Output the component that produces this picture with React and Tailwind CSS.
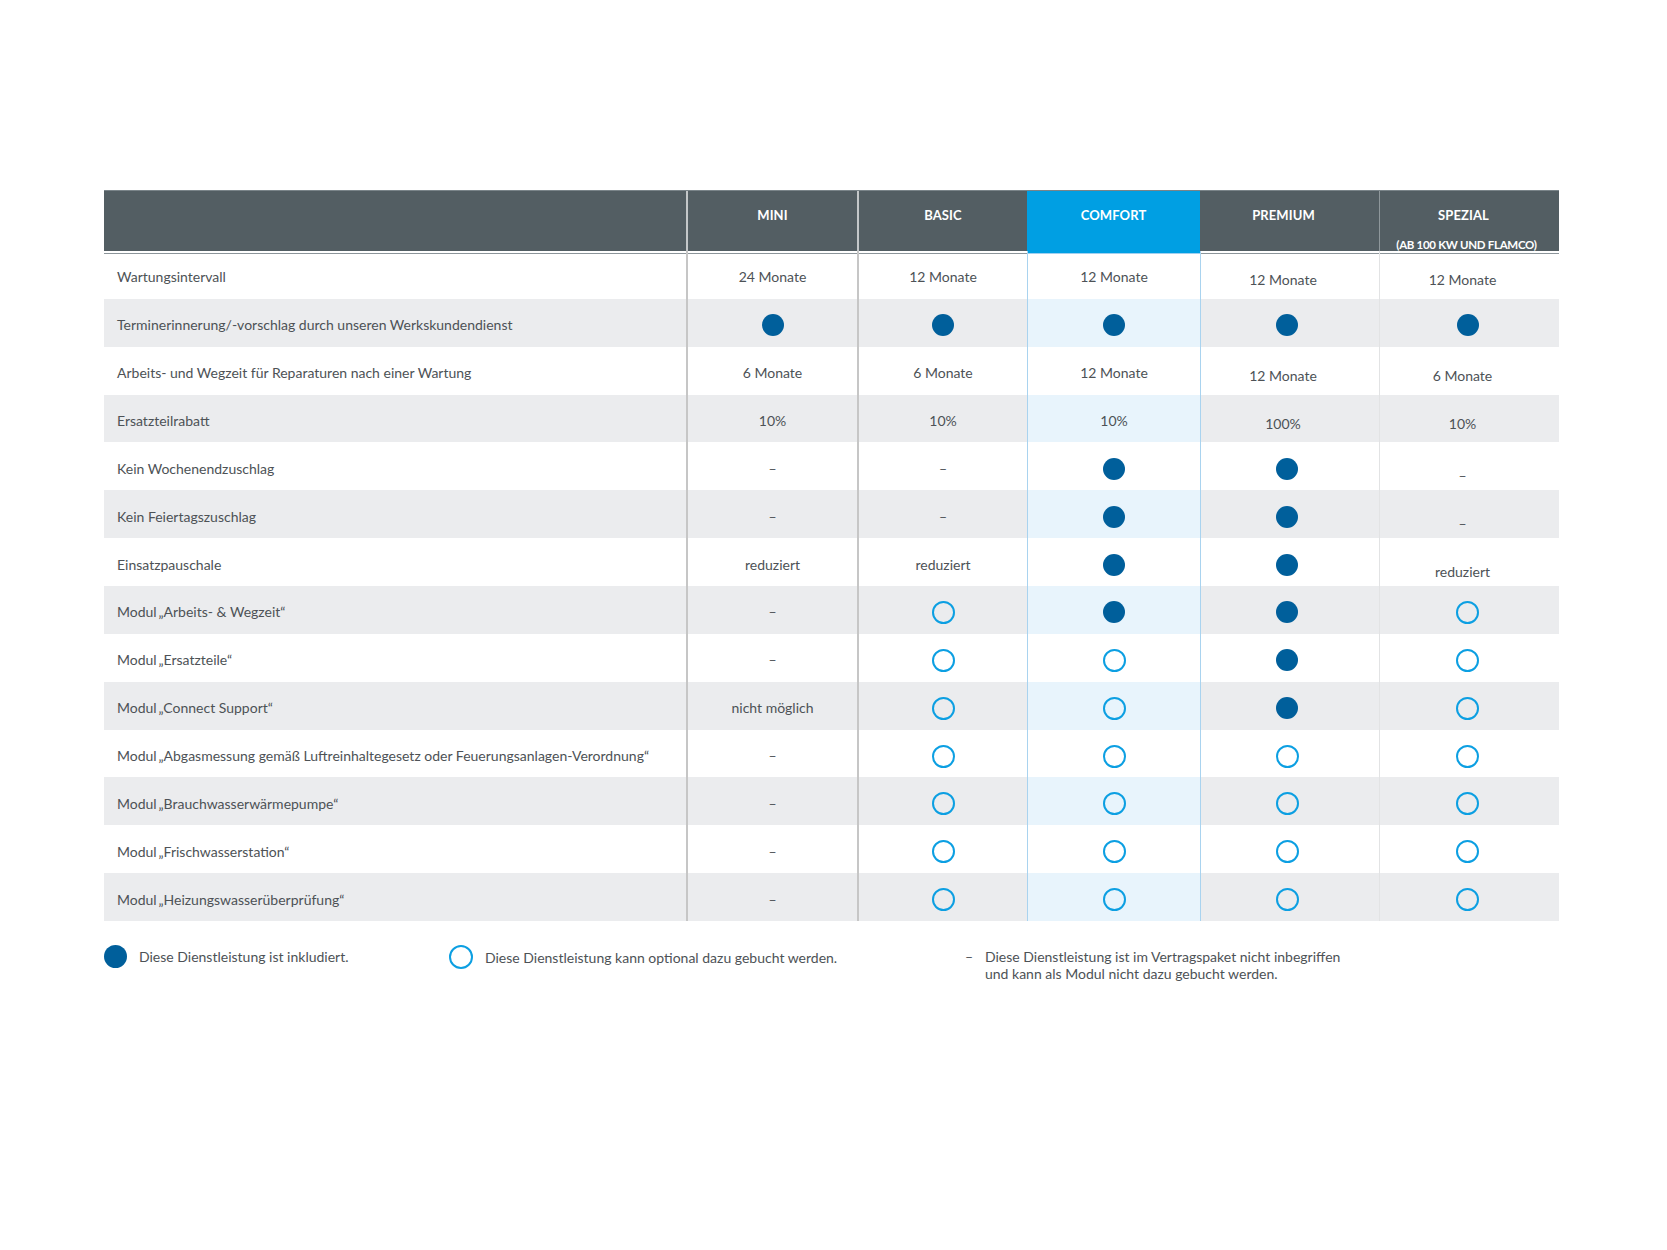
import React from "react";

const F = "F";
const O = "O";
const D = "–";

const rows = [
  ["Wartungsintervall", ["24 Monate", "12 Monate", "12 Monate", "12 Monate", "12 Monate"]],
  ["Terminerinnerung/-vorschlag durch unseren Werkskundendienst", [F, F, F, F, F]],
  ["Arbeits- und Wegzeit für Reparaturen nach einer Wartung", ["6 Monate", "6 Monate", "12 Monate", "12 Monate", "6 Monate"]],
  ["Ersatzteilrabatt", ["10%", "10%", "10%", "100%", "10%"]],
  ["Kein Wochenendzuschlag", [D, D, F, F, D]],
  ["Kein Feiertagszuschlag", [D, D, F, F, D]],
  ["Einsatzpauschale", ["reduziert", "reduziert", F, F, "reduziert"]],
  ["Modul\u2009„Arbeits- & Wegzeit“", [D, O, F, F, O]],
  ["Modul\u2009„Ersatzteile“", [D, O, O, F, O]],
  ["Modul\u2009„Connect Support“", ["nicht möglich", O, O, F, O]],
  ["Modul\u2009„Abgasmessung gemäß Luftreinhaltegesetz oder Feuerungsanlagen-Verordnung“", [D, O, O, O, O]],
  ["Modul\u2009„Brauchwasserwärmepumpe“", [D, O, O, O, O]],
  ["Modul\u2009„Frischwasserstation“", [D, O, O, O, O]],
  ["Modul\u2009„Heizungswasserüberprüfung“", [D, O, O, O, O]],
];

const cols = "grid grid-cols-[582px_171px_170px_173px_179px_180px]";

function Filled() {
  return <span className="block w-[22px] h-[22px] rounded-full bg-[#005f9b]" />;
}
function Outline() {
  return <span className="block w-[23px] h-[23px] rounded-full border-2 border-[#0c9fe2] box-border" />;
}

const bodyBorders = [
  "",
  "border-l-2 border-[#c6c6c6]",
  "border-l-2 border-[#c6c6c6]",
  "border-l border-[#a9d3ef]",
  "border-l border-[#a9d3ef]",
  "border-l border-[#e2e3e4]",
];

function Cell({ v, ci }) {
  const isText = v !== F && v !== O;
  let shift = "";
  if (isText) {
    if (ci >= 4) {
      shift = "pr-[14px]";
      if (ci === 5 && (v === D || v === "reduziert")) shift += " pt-[18px]";
      else shift += " pt-[10px]";
    } else {
      shift = "pt-[4px]";
    }
  } else {
    shift = "pt-[5px]";
    if (ci === 4) shift += " pr-[6px]";
    if (ci === 5) shift += " pr-[4px]";
  }
  let content;
  if (v === F) content = <Filled />;
  else if (v === O) content = <Outline />;
  else content = <span>{v}</span>;
  return (
    <div className={`flex items-center justify-center ${bodyBorders[ci]} ${shift}`}>
      {content}
    </div>
  );
}

export default function App() {
  return (
    <div
      className="w-[1667px] h-[1250px] bg-white pt-[190px] pl-[104px] text-[#4d5256] text-[14px]"
      style={{ fontFamily: "Lato, 'Open Sans', sans-serif" }}
    >
      <div className="w-[1455px]">
        {/* header */}
        <div className={`${cols} h-[61px] bg-[#535e63] border-t border-[#7a8489] text-white font-bold text-[13px] tracking-[0.1px]`}>
          <div className="border-b border-[#8c959a]" />
          <div className="border-l-2 border-[#c3c7c9] border-b border-b-[#8c959a] text-center pt-[15px]">MINI</div>
          <div className="border-l-2 border-[#c3c7c9] border-b border-b-[#8c959a] text-center pt-[15px]">BASIC</div>
          <div className="bg-[#009fe3] border-b border-[#a0d0f0] text-center pt-[15px]">COMFORT</div>
          <div className="border-b border-[#8c959a] text-center pt-[15px] pr-[12px]">PREMIUM</div>
          <div className="border-l border-[#8e979b] border-b border-b-[#8c959a] text-center pt-[15px] pr-[12px]">
            <div>SPEZIAL</div>
            <div className="text-[11.5px] tracking-[-0.3px] mt-[10px] pl-[6px]">(AB 100 KW UND FLAMCO)</div>
          </div>
        </div>
        {/* body */}
        {rows.map(([label, cells], ri) => {
          const gray = ri % 2 === 1;
          return (
            <div key={ri} className={`${cols} h-[47.86px] ${gray ? "bg-[#ebecee]" : "bg-white"}`}>
              <div className="flex items-center pl-[13px] pt-[4px]">{label}</div>
              {cells.map((v, i) => {
                const ci = i + 1;
                const extraBg = ci === 3 && gray ? "bg-[#e8f4fc]" : "";
                return (
                  <div key={ci} className={`grid ${extraBg}`}>
                    <Cell v={v} ci={ci} />
                  </div>
                );
              })}
            </div>
          );
        })}
        {/* legend */}
        <div className="flex items-start mt-[24px]">
          <div className="w-[345px] flex items-center">
            <span className="block w-[23px] h-[23px] rounded-full bg-[#005f9b]" />
            <span className="ml-[12px] leading-[23px]">Diese Dienstleistung ist inkludiert.</span>
          </div>
          <div className="w-[516px] flex items-center">
            <span className="block w-[24px] h-[24px] rounded-full border-2 border-[#0c9fe2] box-border" />
            <span className="ml-[12px] leading-[23px]">Diese Dienstleistung kann optional dazu gebucht werden.</span>
          </div>
          <div className="flex items-start pt-[3px] leading-[17px]">
            <span className="w-[20px]">–</span>
            <span>
              Diese Dienstleistung ist im Vertragspaket nicht inbegriffen
              <br />
              und kann als Modul nicht dazu gebucht werden.
            </span>
          </div>
        </div>
      </div>
    </div>
  );
}
